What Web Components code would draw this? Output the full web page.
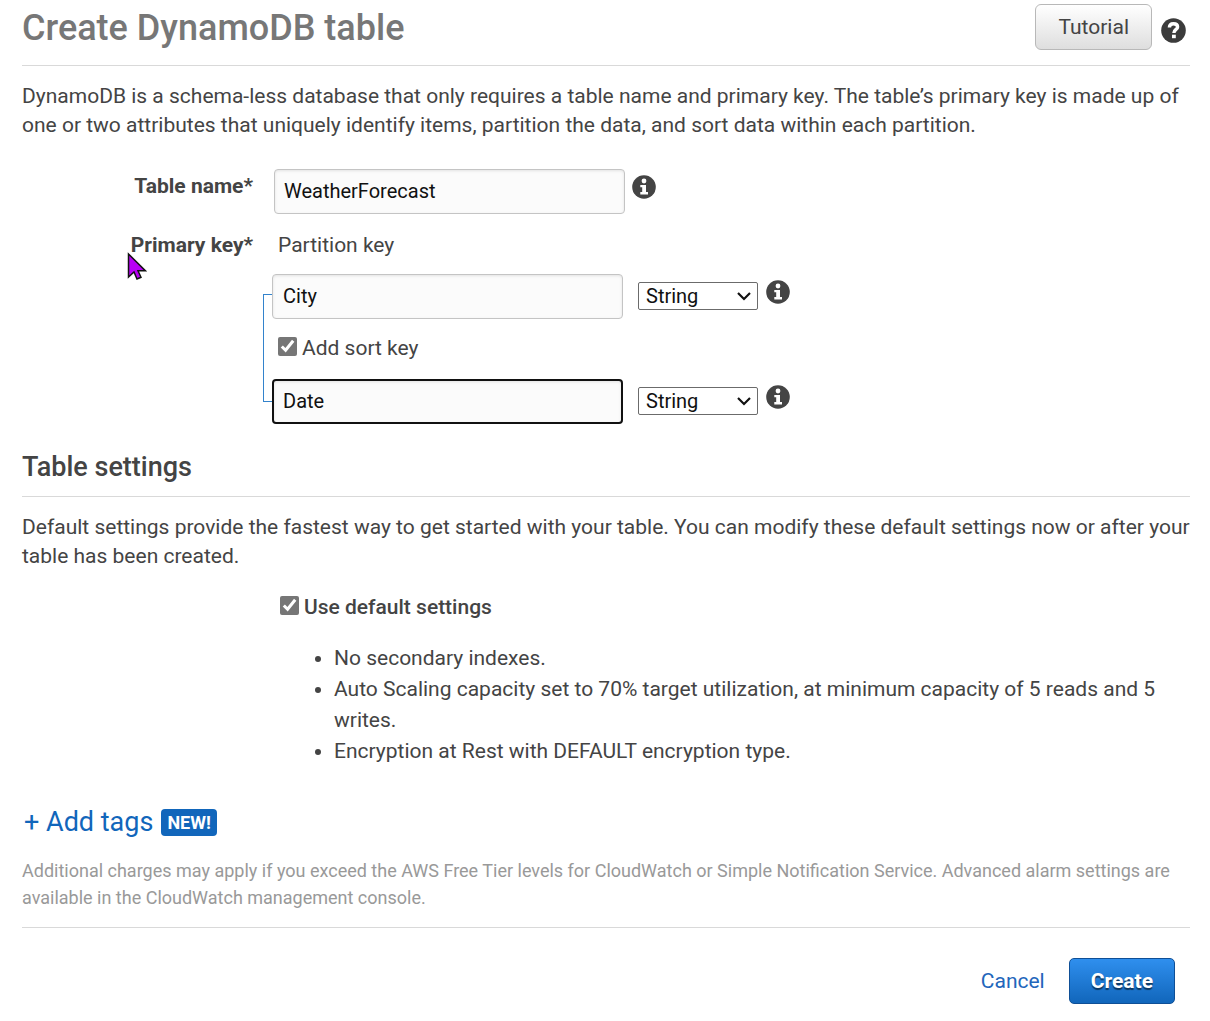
<!DOCTYPE html>
<html lang="en">
<head>
<meta charset="utf-8">
<title>Create DynamoDB table</title>
<style>
  body { margin: 0; background: #fff; color: #444; font: 400 21px/29px Roboto, "Liberation Sans", sans-serif; }
</style>
</head>
<body>
<create-table-page></create-table-page>

<template id="page">
  <style>
    :host { display: block; padding: 0 20px 16px 22px; }
    p { margin: 16px 0 0; }
    .fields { display: flex; flex-direction: column; gap: 17px; margin-top: 29px; }
    .defaults { margin: 22px 0 0 258px; }
    ul { margin: 21px 0 0; padding-left: 54px; line-height: 31px; }
    .tags { display: flex; align-items: center; gap: 8px; margin: 37px 0 17px; padding-left: 2px; }
    .tags a { color: #1166bb; font-size: 27px; line-height: 36px; text-decoration: none; }
    .fine { margin: 0; padding-bottom: 16px; border-bottom: 1px solid #d9d9d9; color: #999; font-size: 18px; line-height: 27px; }
  </style>
  <page-header heading="Create DynamoDB table"></page-header>
  <p>DynamoDB is a schema-less database that only requires a table name and primary key. The table’s primary key is made up of one or two attributes that uniquely identify items, partition the data, and sort data within each partition.</p>
  <div class="fields">
    <name-field></name-field>
    <primary-key-field></primary-key-field>
  </div>
  <section-heading>Table settings</section-heading>
  <p>Default settings provide the fastest way to get started with your table. You can modify these default settings now or after your table has been created.</p>
  <div class="defaults">
    <check-option strong>Use default settings</check-option>
    <ul>
      <li>No secondary indexes.</li>
      <li>Auto Scaling capacity set to 70% target utilization, at minimum capacity of 5 reads and 5 writes.</li>
      <li>Encryption at Rest with DEFAULT encryption type.</li>
    </ul>
  </div>
  <div class="tags"><a href="#tags">+ Add tags</a><new-badge>NEW!</new-badge></div>
  <p class="fine">Additional charges may apply if you exceed the AWS Free Tier levels for CloudWatch or Simple Notification Service. Advanced alarm settings are available in the CloudWatch management console.</p>
  <page-actions></page-actions>
</template>

<template id="header">
  <style>
    :host { display: flex; align-items: center; gap: 9px; padding: 4px 4px 15px 0; border-bottom: 1px solid #d9d9d9; }
    h1 { flex: 1; margin: 0; padding-top: 2px; color: #777; font-size: 36px; font-weight: 500; line-height: 44px; }
    button { box-sizing: border-box; height: 46px; padding: 0 22px; border: 1px solid #b8b8b8; border-radius: 6px; background: linear-gradient(#fff, #dedede); color: #444; font: inherit; }
    .help { width: 25px; height: 46px; padding: 0; border: 0; background: none; }
    svg { display: block; width: 25px; height: 25px; margin-top: 6px; }
  </style>
  <h1></h1>
  <button type="button">Tutorial</button>
  <button type="button" class="help" aria-label="Help">
    <svg viewBox="0 0 25 25"><circle cx="12.500" cy="12.500" r="12.300" fill="#3b3b3b"/><path d="M8.400 9.600C8.400 6.700 10.200 5.700 12.500 5.700C15 5.700 16.600 7 16.600 8.900C16.600 11.500 12.900 11.400 12.900 15" fill="none" stroke="#fff" stroke-width="3.400"/><path d="M11 16.700H14.800V20.200H11Z" fill="#fff"/></svg>
  </button>
</template>

<template id="heading">
  <style>
    :host { display: block; margin-top: 27px; padding-bottom: 13px; border-bottom: 1px solid #d9d9d9; }
    h2 { margin: 0; font-size: 27px; font-weight: 500; line-height: 32px; }
  </style>
  <h2><slot></slot></h2>
</template>

<template id="info">
  <style>
    :host { display: block; flex: none; width: 24px; height: 24px; margin-top: 6px; }
    svg { display: block; width: 24px; height: 24px; }
  </style>
  <svg viewBox="0 0 24 24" role="img" aria-label="More information"><circle cx="12" cy="12" r="11.800" fill="#444"/><circle cx="12" cy="6" r="2.400" fill="#fff"/><path d="M8.300 10H14V17H16V19.400H8.300V17H10.200V12.300H8.300Z" fill="#fff"/></svg>
</template>

<template id="select">
  <style>
    :host { display: grid; align-items: center; width: 120px; height: 28px; margin: 8px 0 0; }
    select { grid-area: 1 / 1; box-sizing: border-box; width: 100%; height: 28px; padding: 0 7px; border: 1px solid #6b6b6b; border-radius: 2px; background: #fff; color: #111; font: inherit; font-size: 20px; line-height: 26px; appearance: none; }
    svg { grid-area: 1 / 1; justify-self: end; width: 14px; height: 10px; margin-right: 7px; pointer-events: none; }
  </style>
  <select aria-label="Key type"><option>String</option><option>Binary</option><option>Number</option></select>
  <svg viewBox="0 0 14 10"><path d="M1 2L7 8L13 2" fill="none" stroke="#111" stroke-width="2.200"/></svg>
</template>

<template id="check">
  <style>
    :host { display: block; }
    label { display: flex; align-items: flex-start; gap: 5px; }
    input { flex: none; width: 19px; height: 19px; margin: 3px 0 0; accent-color: #767676; }
    :host([strong]) label { font-weight: 500; }
  </style>
  <label><input type="checkbox" checked><slot></slot></label>
</template>

<template id="name">
  <style>
    :host { display: flex; align-items: flex-start; }
    label { width: 231px; margin: 3px 21px 0 0; font-weight: 700; text-align: right; }
    input { box-sizing: border-box; width: 351px; height: 45px; margin-right: 7px; padding: 0 9px 2px; border: 1px solid #c4c4c4; border-radius: 4px; background: #fbfbfb; box-shadow: inset 0 1px 3px #0000001a; color: #111; font: inherit; font-size: 20px; outline: 0; }
  </style>
  <label for="name">Table name*</label>
  <input id="name" value="WeatherForecast">
  <info-icon></info-icon>
</template>

<template id="key">
  <style>
    :host { display: block; }
    .top { display: flex; gap: 25px; }
    .title { position: relative; width: 231px; font-weight: 700; text-align: right; }
    pointer-arrow { position: absolute; left: 105px; top: 21px; }
    .group { display: flex; margin: 14px 0 0 241px; }
    .bracket { width: 8px; margin: 20px 0 22px; border: 1px solid #3383cc; border-right: 0; }
    .keys { display: flex; flex-direction: column; }
    .row { display: flex; align-items: flex-start; }
    input { box-sizing: border-box; width: 351px; height: 45px; margin-right: 15px; padding: 0 10px 2px; border: 1px solid #c4c4c4; border-radius: 4px; background: #fbfbfb; box-shadow: inset 0 1px 3px #0000001a; color: #111; font: inherit; font-size: 20px; outline: 0; }
    input.active { padding: 0 9px 2px; border: 2px solid #111; }
    type-select { margin-right: 8px; }
    check-option { padding: 15px 0 16px 6px; }
  </style>
  <div class="top">
    <div class="title">Primary key*<pointer-arrow></pointer-arrow></div>
    <label for="partition">Partition key</label>
  </div>
  <div class="group">
    <div class="bracket"></div>
    <div class="keys">
      <div class="row"><input id="partition" value="City"><type-select></type-select><info-icon></info-icon></div>
      <check-option>Add sort key</check-option>
      <div class="row"><input class="active" value="Date" aria-label="Sort key"><type-select></type-select><info-icon></info-icon></div>
    </div>
  </div>
</template>

<template id="pointer">
  <style>
    :host { display: block; width: 20px; height: 28px; }
    svg { display: block; }
  </style>
  <svg width="20" height="28" viewBox="0 0 20 28"><path d="M1.500 2V25L7 20L10 27L14 25.300L11 18.700H18.300Z" fill="#b800f5" stroke="#111" stroke-width="1.500"/></svg>
</template>

<template id="badge">
  <style>
    :host { display: block; padding: 0 6px; border-radius: 4px; background: #1166bb; color: #fff; font-size: 18px; font-weight: 700; line-height: 27px; }
  </style>
  <slot></slot>
</template>

<template id="actions">
  <style>
    :host { display: flex; align-items: center; justify-content: flex-end; gap: 24px; padding: 30px 15px 0 0; }
    a { color: #2266bb; text-decoration: none; }
    button { box-sizing: border-box; height: 46px; padding: 0 21px; border: 1px solid #0f4f96; border-radius: 5px; background: linear-gradient(#2f8fee, #1166bb); color: #fff; font: inherit; font-weight: 700; text-shadow: 0 2px 1px #0008; }
  </style>
  <a href="#cancel">Cancel</a>
  <button type="button">Create</button>
</template>

<script>
  class TemplateElement extends HTMLElement {
    constructor() {
      super();
      const template = document.getElementById(this.constructor.template);
      this.attachShadow({ mode: "open" }).append(template.content.cloneNode(true));
    }
  }
  class PageHeader extends TemplateElement {
    static template = "header";
    connectedCallback() {
      this.shadowRoot.querySelector("h1").textContent = this.getAttribute("heading");
    }
  }
  customElements.define("page-header", PageHeader);

  const parts = {
    "section-heading": "heading",
    "info-icon": "info",
    "type-select": "select",
    "check-option": "check",
    "pointer-arrow": "pointer",
    "name-field": "name",
    "primary-key-field": "key",
    "new-badge": "badge",
    "page-actions": "actions",
    "create-table-page": "page"
  };
  for (const [tag, id] of Object.entries(parts)) {
    customElements.define(tag, class extends TemplateElement { static template = id; });
  }
</script>
</body>
</html>
